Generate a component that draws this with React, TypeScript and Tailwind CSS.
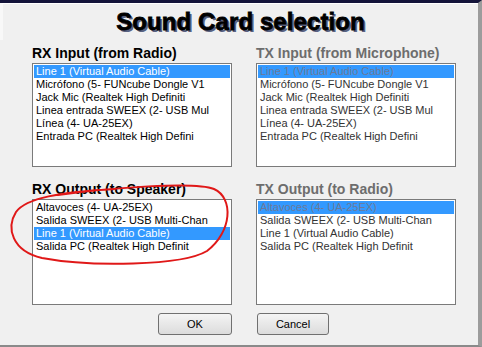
import React from "react";

const inputs = [
  "Line 1 (Virtual Audio Cable)",
  "Micrófono (5- FUNcube Dongle V1",
  "Jack Mic (Realtek High Definiti",
  "Linea entrada SWEEX (2- USB Mul",
  "Línea (4- UA-25EX)",
  "Entrada PC (Realtek High Defini",
];

const outputs = [
  "Altavoces (4- UA-25EX)",
  "Salida SWEEX (2- USB Multi-Chan",
  "Line 1 (Virtual Audio Cable)",
  "Salida PC (Realtek High Definit",
];

function ListBox({
  items,
  selected,
  disabled,
  height,
}: {
  items: string[];
  selected: number;
  disabled?: boolean;
  height: string;
}) {
  return (
    <div className={`mt-[2px] border border-[#7a7a7a] bg-white p-px ${height}`}>
      {items.map((item, i) => {
        const sel = i === selected;
        return (
          <div
            key={item}
            className={`h-[13px] truncate pl-[2px] text-[11px] leading-[13px] ${
              sel
                ? disabled
                  ? "bg-[#3399ff] text-[#6b7a99]"
                  : "bg-[#3399ff] text-white"
                : disabled
                ? "text-[#333]"
                : "text-black"
            }`}
          >
            {item}
          </div>
        );
      })}
    </div>
  );
}

function Label({ children, disabled }: { children: React.ReactNode; disabled?: boolean }) {
  return (
    <div
      className={`whitespace-nowrap text-[14px] font-bold leading-[15px] ${
        disabled ? "text-[#6d6d6d]" : "text-black"
      }`}
    >
      {children}
    </div>
  );
}

function Button({ children, width }: { children: React.ReactNode; width: string }) {
  return (
    <button
      className={`h-[22px] ${width} rounded-[3px] border border-[#707070] bg-gradient-to-b from-[#f4f4f4] to-[#dcdcdc] text-[11px] text-black`}
    >
      {children}
    </button>
  );
}

export default function App() {
  return (
    <div
      className="relative h-[347px] w-[482px] overflow-hidden border-t-[3px] border-r-[4px] border-b-[2px] border-t-[#14143a] border-r-[#9c9c9c] border-b-[#8a8a8a] bg-[#f0f0f0]"
      style={{ fontFamily: '"Liberation Sans", Arial, sans-serif' }}
    >
      <div className="h-[37px] border-t border-l-[3px] border-t-white border-l-[#f8f8f8] text-center text-[24px] font-bold leading-[36px] tracking-[0.1px] text-black [-webkit-text-stroke:0.8px_black] [text-shadow:2px_2px_0_#5a6280]">
        Sound Card selection
      </div>

      <div className="grid grid-cols-[200px_200px] gap-x-[24px] pl-[32px]">
        <div className="pt-[6px]">
          <Label>RX Input (from Radio)</Label>
          <ListBox items={inputs} selected={0} height="h-[104px]" />
        </div>
        <div className="pt-[6px]">
          <Label disabled>TX Input (from Microphone)</Label>
          <ListBox items={inputs} selected={0} disabled height="h-[104px]" />
        </div>
        <div className="pt-[15px]">
          <Label>RX Output (to Speaker)</Label>
          <ListBox items={outputs} selected={2} height="h-[106px]" />
        </div>
        <div className="pt-[15px]">
          <Label disabled>TX Output (to Radio)</Label>
          <ListBox items={outputs} selected={0} disabled height="h-[106px]" />
        </div>
      </div>

      <div className="flex gap-[25px] pl-[158px] pt-[8px]">
        <Button width="w-[74px]">OK</Button>
        <Button width="w-[72px]">Cancel</Button>
      </div>

      <svg
        className="pointer-events-none absolute left-0 top-[-3px]"
        width="482"
        height="347"
        viewBox="0 0 482 347"
      >
        <path
          d="M 58 195 C 110 188, 195 181, 214 189 C 234 198, 232 232, 207 251 C 182 266, 90 267, 42 258 C 12 251, 6 228, 16 212 C 26 198, 60 192, 115 189"
          fill="none"
          stroke="#e01818"
          strokeWidth="2"
          strokeLinecap="round"
        />
      </svg>
    </div>
  );
}
